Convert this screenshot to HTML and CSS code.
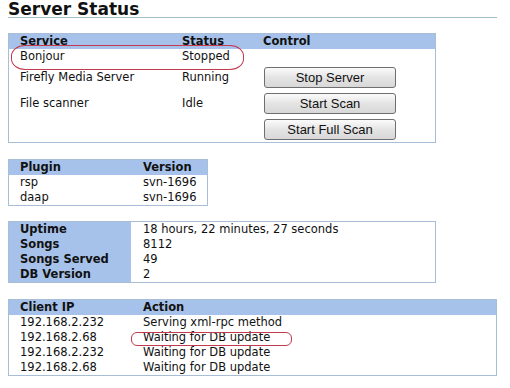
FILE: index.html
```html
<!DOCTYPE html>
<html lang="en">
<head>
  <meta charset="UTF-8">
  <title>Server Status</title>
  <link rel="stylesheet" href="styles.css">
</head>
<body>
  <h1 class="title">Server Status</h1>

  <table class="grid services">
    <tr class="head">
      <th class="first">Service</th>
      <th class="status-col">Status</th>
      <th>Control</th>
    </tr>
    <tr class="plain">
      <td class="first">Bonjour</td>
      <td>Stopped</td>
      <td></td>
    </tr>
    <tr class="btn-row">
      <td class="first">Firefly Media Server</td>
      <td>Running</td>
      <td><button class="button">Stop Server</button></td>
    </tr>
    <tr class="btn-row">
      <td class="first">File scanner</td>
      <td>Idle</td>
      <td><button class="button">Start Scan</button></td>
    </tr>
    <tr class="btn-row">
      <td class="first"></td>
      <td></td>
      <td><button class="button">Start Full Scan</button></td>
    </tr>
  </table>

  <table class="grid plugins">
    <tr class="head">
      <th class="first">Plugin</th>
      <th>Version</th>
    </tr>
    <tr><td class="first">rsp</td><td>svn-1696</td></tr>
    <tr><td class="first">daap</td><td>svn-1696</td></tr>
  </table>

  <table class="grid stats">
    <tr><th class="first label">Uptime</th><td class="value">18 hours, 22 minutes, 27 seconds</td></tr>
    <tr><th class="first label">Songs</th><td class="value">8112</td></tr>
    <tr><th class="first label">Songs Served</th><td class="value">49</td></tr>
    <tr><th class="first label">DB Version</th><td class="value">2</td></tr>
  </table>

  <table class="grid clients">
    <tr class="head">
      <th class="first">Client IP</th>
      <th>Action</th>
    </tr>
    <tr><td class="first">192.168.2.232</td><td>Serving xml-rpc method</td></tr>
    <tr><td class="first">192.168.2.68</td><td>Waiting for DB update</td></tr>
    <tr><td class="first">192.168.2.232</td><td>Waiting for DB update</td></tr>
    <tr><td class="first">192.168.2.68</td><td>Waiting for DB update</td></tr>
  </table>

  <!-- hand drawn highlight marks -->
  <div class="mark mark-bonjour"></div>
  <div class="mark mark-waiting"></div>
</body>
</html>
```
FILE: styles.css
```css
body {
  font-family: "DejaVu Sans", Verdana, sans-serif;
  font-size: 11.5px;
  color: #111;
  margin: 0;
  padding: 0 13px 0 8px;
  background: #fff;
  position: relative;
}
.title {
  font-size: 17px;
  font-weight: bold;
  margin: 0;
  padding: 1px 0 0;
  line-height: 16px;
  border-bottom: 1px solid #a3bdcc;
}
.grid {
  border-collapse: collapse;
  table-layout: fixed;
  border: 1px solid #a8bed6;
  line-height: 15px;
}
.grid th,
.grid td {
  padding: 0;
  text-align: left;
  white-space: nowrap;
  vertical-align: middle;
}
.grid th {
  font-weight: bold;
}
.grid .first {
  padding-left: 11px;
}
.head {
  background: #a6c2ea;
}
.head th {
  height: 15px;
}
.services {
  width: 428px;
  margin-top: 15px;
}
.services .first {
  width: 162px;
}
.services .status-col {
  width: 81px;
}
.services .plain td {
  height: 15px;
}
.services .btn-row td {
  height: 26px;
}
.plugins {
  width: 200px;
  margin-top: 16px;
}
.plugins .first {
  width: 123px;
}
.stats {
  width: 428px;
  margin-top: 15px;
}
.stats .label {
  width: 111px;
  background: #a6c2ea;
}
.stats .value {
  padding-left: 12px;
}
.clients {
  width: 489px;
  margin-top: 16px;
}
.clients .first {
  width: 123px;
}
.button {
  display: block;
  width: 132px;
  height: 21px;
  margin: 0 0 0 1px;
  padding: 0;
  font-family: "Liberation Sans", Arial, sans-serif;
  font-size: 13px;
  color: #111;
  background: linear-gradient(#fbfbfb, #e4e4e4 50%, #d8d8d8);
  border: 1px solid #6f6f6f;
  border-radius: 3px;
}
.mark {
  position: absolute;
  border: 1px solid #c23a4e;
}
.mark-bonjour {
  left: 11px;
  top: 45px;
  width: 231px;
  height: 23px;
  border-radius: 14px / 11px;
}
.mark-waiting {
  left: 131px;
  top: 332px;
  width: 159px;
  height: 12px;
  border-radius: 6px;
}
```
